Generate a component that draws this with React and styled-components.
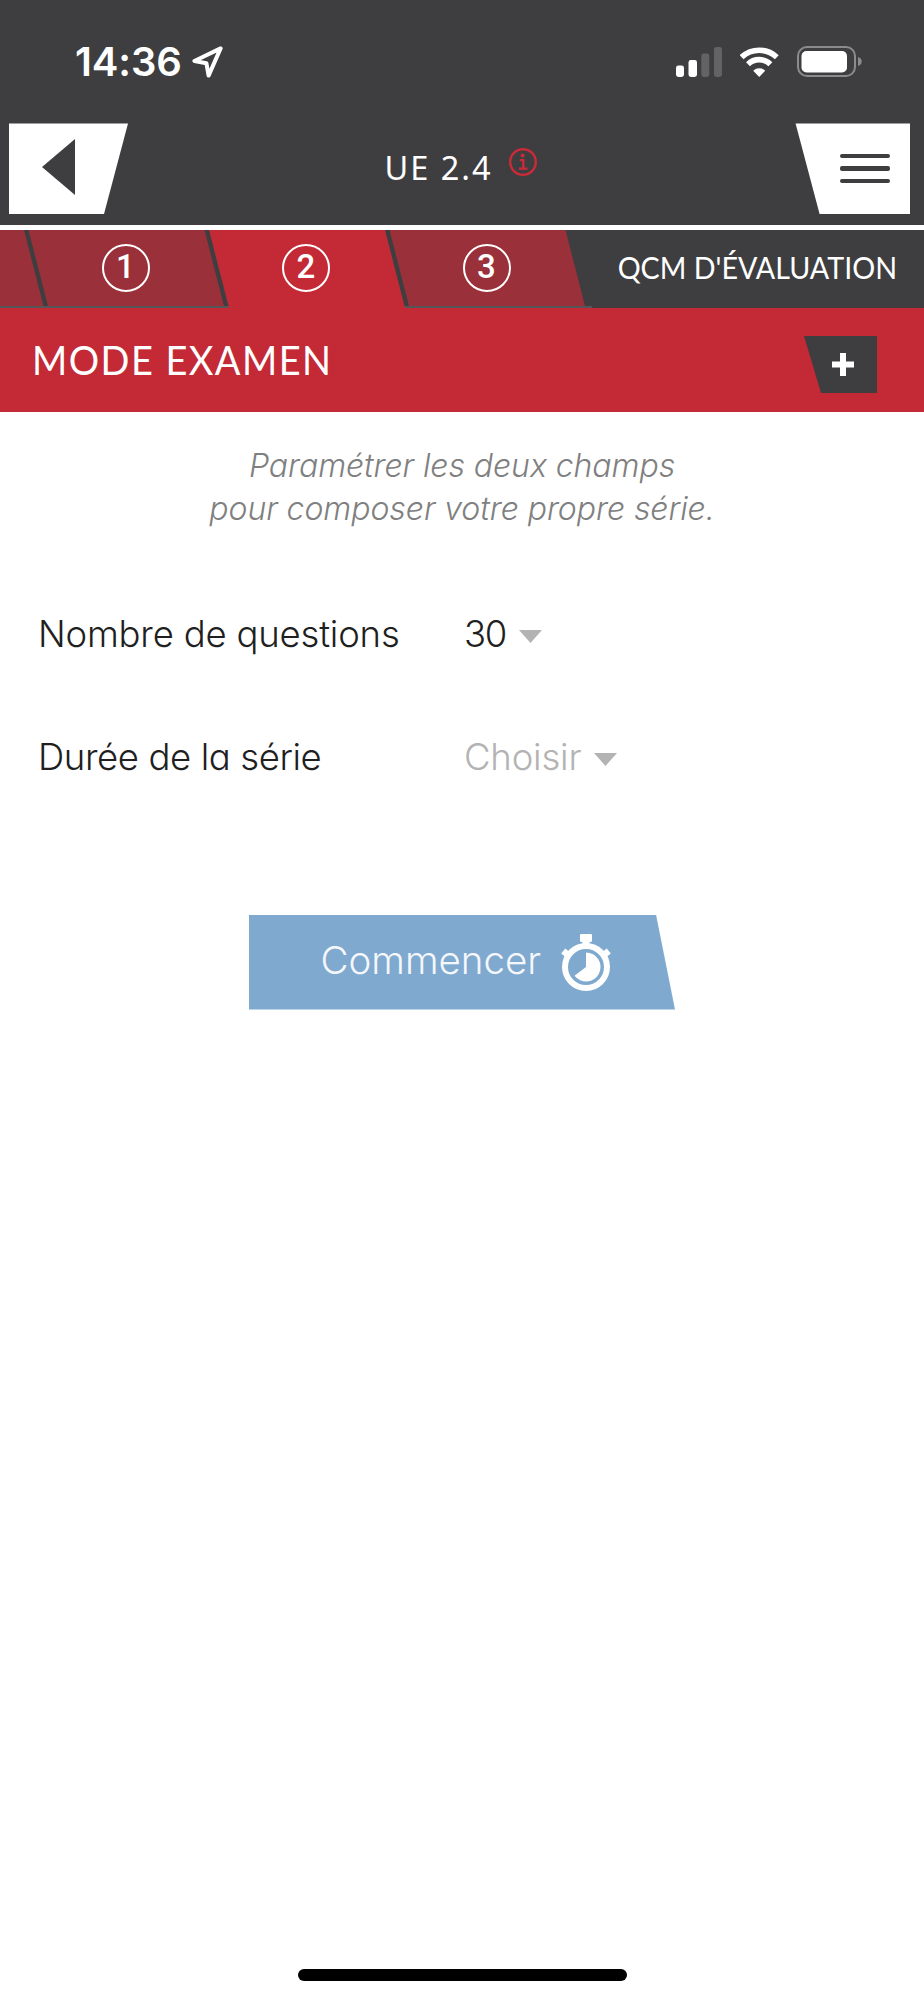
import React, { useState } from 'react';
import styled, { createGlobalStyle } from 'styled-components';

const GlobalStyle = createGlobalStyle`
  * {
    box-sizing: border-box;
  }

  body {
    margin: 0;
    background: #fff;
    font-family: Inter, 'Liberation Sans', sans-serif;
  }

  button {
    margin: 0;
    padding: 0;
    border: none;
    font: inherit;
  }
`;

const Screen = styled.div`
  display: flex;
  flex-direction: column;
  width: 924px;
  height: 2000px;
  overflow: hidden;
  background: #fff;
`;

const Header = styled.header`
  flex: none;
  height: 225px;
  background: #3e3e40;
`;

const StatusBar = styled.div`
  display: flex;
  align-items: center;
  justify-content: space-between;
  height: 123px;
  padding: 0 61px 0 75px;
`;

const StatusGroup = styled.div`
  display: flex;
  align-items: center;
  gap: ${(props) => props.$gap}px;
`;

const Time = styled.span`
  color: #fff;
  font-size: 40px;
  font-weight: 600;
  line-height: 48px;
  letter-spacing: -0.1px;
`;

const NavBar = styled.nav`
  display: flex;
  justify-content: space-between;
  height: 91px;
  padding: 0 14px 0 9px;
`;

const BackButton = styled.button`
  width: 119px;
  height: 91px;
  padding-left: 33px;
  text-align: left;
  background: #fff;
  clip-path: polygon(0 0.4px, 100% 0.4px, 95px 100%, 0 100%);
`;

const MenuButton = styled.button`
  display: flex;
  flex-direction: column;
  justify-content: center;
  gap: 8px;
  width: 115px;
  height: 91px;
  padding-left: 45px;
  background: #fff;
  clip-path: polygon(0.6px 0.4px, 100% 0.4px, 100% 100%, 24.6px 100%);
`;

const MenuLine = styled.span`
  width: 50px;
  height: 4.5px;
  border-radius: 2px;
  background: #3e3e40;
`;

const NavTitle = styled.div`
  display: flex;
  align-items: center;
  gap: 16px;
  height: 90px;
  margin-right: 2px;
`;

const Title = styled.h1`
  margin: 0;
  color: #fff;
  font: 400 32.5px/44px 'Noto Sans', sans-serif;
  letter-spacing: 2px;
`;

const InfoIcon = styled.svg`
  margin-bottom: 12px;
`;

const Tabs = styled.div`
  display: flex;
  flex: none;
  height: 83px;
  padding-right: 27px;
  border-top: 5px solid #fff;
  background: #3e3e40;
  overflow: hidden;
`;

const Tab = styled.div`
  position: relative;
  flex: none;
  width: 196px;
  margin-right: -15.5px;
  z-index: ${(props) => (props.$active ? 1 : 0)};

  &:first-child {
    margin-left: -152px;
  }

  &::after {
    content: '';
    position: absolute;
    left: 13px;
    right: -6px;
    bottom: 0;
    height: 2.5px;
    background: ${(props) => (props.$active ? 'transparent' : '#555659')};
  }
`;

const TabShape = styled.div`
  display: flex;
  align-items: center;
  justify-content: center;
  height: 78px;
  padding: 0 2px 2px 0;
  background: ${(props) => (props.$active ? '#c32a36' : '#9a3039')};
  clip-path: polygon(0 0, 176px 0, 100% 100%, 20px 100%);
`;

const TabNumber = styled.span`
  width: 48px;
  height: 48px;
  border: 2px solid #fff;
  border-radius: 50%;
  color: #fff;
  text-align: center;
  font: 500 33px/41px Roboto, sans-serif;
`;

const TabLabel = styled.span`
  margin-left: auto;
  color: #fff;
  font: 400 31px/75px Lato, sans-serif;
  white-space: nowrap;
  transform: scaleX(0.925);
  transform-origin: right;
`;

const ModeBar = styled.section`
  display: flex;
  flex: none;
  justify-content: space-between;
  height: 104px;
  padding: 28px 47px 0 32px;
  background: #c32a36;
`;

const ModeTitle = styled.h2`
  margin: 0;
  color: #fff;
  font: 400 40px/48px Lato, sans-serif;
  letter-spacing: 1.5px;
  transform: scaleX(0.95);
  transform-origin: left;
`;

const AddButton = styled.button`
  display: flex;
  align-items: center;
  justify-content: center;
  width: 73px;
  height: 57px;
  padding-left: 5px;
  background: #3e3e40;
  clip-path: polygon(0 0, 100% 0, 100% 100%, 17px 100%);
`;

const Hint = styled.p`
  margin: 32px 0 0;
  color: #808080;
  text-align: center;
  font-size: 32px;
  font-style: italic;
  font-weight: 300;
  line-height: 43px;
  letter-spacing: -0.07px;
  font-feature-settings: 'cv11';
`;

const Form = styled.form`
  display: flex;
  flex-direction: column;
  align-items: center;
`;

const Fields = styled.div`
  display: flex;
  flex-direction: column;
  align-self: stretch;
  gap: 75px;
  padding: 80px 0 0 38px;
`;

const Field = styled.div`
  display: grid;
  grid-template-columns: 426px auto;
  font-size: 36.5px;
  font-weight: 300;
  line-height: 48px;
  font-feature-settings: 'cv11';
`;

const Label = styled.span`
  color: #1f1f1f;
  letter-spacing: ${(props) => props.$spacing}px;
`;

const Select = styled.button`
  display: flex;
  align-items: center;
  gap: 13px;
  color: ${(props) => (props.$empty ? '#b3b3b3' : '#1f1f1f')};
  letter-spacing: ${(props) => (props.$empty ? -0.2 : -1.4)}px;
  background: none;
`;

const CaretIcon = styled.svg`
  margin-top: 5px;
`;

const StartButton = styled.button`
  display: flex;
  align-items: center;
  gap: 20px;
  width: 426px;
  height: 95px;
  margin-top: 133.5px;
  padding-left: 71.5px;
  color: #f5f7fb;
  background: #7fa9cf;
  font-size: 38.5px;
  font-weight: 300;
  clip-path: polygon(0 0, 407px 0, 100% 100%, 0 100%);
`;

const StartLabel = styled.span`
  margin-bottom: 4px;
`;

const HomeIndicator = styled.div`
  flex: none;
  align-self: center;
  width: 329px;
  height: 12px;
  margin: auto 0 19px;
  border-radius: 6px;
  background: #000;
`;

const Caret = () => (
  <CaretIcon width="23" height="13" viewBox="0 0 23 13">
    <path d="M0 0H23L11.5 13Z" fill="#b3b3b3" />
  </CaretIcon>
);

const Location = () => (
  <svg width="32" height="33" viewBox="0 0 32 33">
    <path
      d="M28.6 3.4 2.4 16 14.4 18.2 16.6 30.6Z"
      fill="none"
      stroke="#fff"
      strokeWidth="4"
      strokeLinejoin="round"
    />
  </svg>
);

const Signal = () => (
  <svg width="47" height="30" viewBox="0 0 47 30">
    <rect x="0" y="18.5" width="8" height="11.5" rx="2.4" fill="#fff" />
    <rect x="12.5" y="13" width="8.5" height="17" rx="2.4" fill="#fff" />
    <rect x="25.3" y="6.5" width="8" height="23.5" rx="2.4" fill="#636366" />
    <rect x="38" y="0" width="8" height="30" rx="2.4" fill="#636366" />
  </svg>
);

const Wifi = () => (
  <svg width="40" height="30" viewBox="0.8 0 40 30">
    <g fill="none" stroke="#fff" strokeWidth="5.6">
      <path d="M2.4 10.2A25.6 25.6 0 0 1 37.6 10.2" />
      <path d="M8.8 17.2A16 16 0 0 1 31.2 17.2" />
    </g>
    <path d="M14 23.8A8.6 8.6 0 0 1 26 23.8L20 30Z" fill="#fff" />
  </svg>
);

const Battery = () => (
  <svg width="66" height="31" viewBox="0 0 66 31">
    <rect x="1" y="1" width="57" height="29" rx="9" fill="none" stroke="#8b8b8d" strokeWidth="2" />
    <rect x="4.5" y="5" width="45.5" height="21.5" rx="5" fill="#fff" />
    <path d="M61 11C66 12.5 66 18.5 61 20Z" fill="#8b8b8d" />
  </svg>
);

const Stopwatch = () => (
  <svg width="50" height="57" viewBox="0 0 50 57">
    <rect x="19" y="0" width="12" height="8" rx="1.2" fill="#fff" />
    <rect x="21.5" y="7" width="7" height="4" fill="#fff" />
    <path d="M2.2 17 9 22.5M47.8 17 41 22.5" stroke="#fff" strokeWidth="6.5" />
    <circle cx="25" cy="33" r="21" fill="none" stroke="#fff" strokeWidth="6" />
    <path d="M25 18.5A14.5 14.5 0 1 1 13.5 41.8L25 33Z" fill="#fff" />
  </svg>
);

function App() {
  const [count] = useState('30');
  const [duration] = useState('');

  return (
    <Screen>
      <GlobalStyle />
      <Header>
        <StatusBar>
          <StatusGroup $gap={10.5}>
            <Time>14:36</Time>
            <Location />
          </StatusGroup>
          <StatusGroup $gap={17}>
            <Signal />
            <Wifi />
            <Battery />
          </StatusGroup>
        </StatusBar>
        <NavBar>
          <BackButton>
            <svg width="33" height="56" viewBox="0 0 33 56">
              <path d="M33 0V56L0 28Z" fill="#3e3e40" />
            </svg>
          </BackButton>
          <NavTitle>
            <Title>UE 2.4</Title>
            <InfoIcon width="28" height="28" viewBox="0 0 28 28">
              <circle cx="14" cy="14" r="12.8" fill="none" stroke="#cb2a39" strokeWidth="2.4" />
              <circle cx="13.6" cy="7.5" r="2" fill="#cb2a39" />
              <path d="M10.8 12.2H14.3V20.3M10 20.6H18.5" fill="none" stroke="#cb2a39" strokeWidth="2.3" />
            </InfoIcon>
          </NavTitle>
          <MenuButton>
            <MenuLine />
            <MenuLine />
            <MenuLine />
          </MenuButton>
        </NavBar>
      </Header>
      <Tabs>
        <Tab>
          <TabShape />
        </Tab>
        {[1, 2, 3].map((n) => (
          <Tab key={n} $active={n === 2}>
            <TabShape $active={n === 2}>
              <TabNumber>{n}</TabNumber>
            </TabShape>
          </Tab>
        ))}
        <TabLabel>QCM D'ÉVALUATION</TabLabel>
      </Tabs>
      <ModeBar>
        <ModeTitle>MODE EXAMEN</ModeTitle>
        <AddButton>
          <svg width="22" height="23" viewBox="0 0 22 23">
            <path d="M11 0V23M0 11.5H22" stroke="#fff" strokeWidth="6" />
          </svg>
        </AddButton>
      </ModeBar>
      <Hint>
        Paramétrer les deux champs
        <br />
        pour composer votre propre série.
      </Hint>
      <Form onSubmit={(e) => e.preventDefault()}>
        <Fields>
          <Field>
            <Label $spacing={-0.2}>Nombre de questions</Label>
            <Select type="button">
              <span>{count}</span>
              <Caret />
            </Select>
          </Field>
          <Field>
            <Label $spacing={-0.4}>Durée de la série</Label>
            <Select type="button" $empty>
              <span>{duration || 'Choisir'}</span>
              <Caret />
            </Select>
          </Field>
        </Fields>
        <StartButton type="submit">
          <StartLabel>Commencer</StartLabel>
          <Stopwatch />
        </StartButton>
      </Form>
      <HomeIndicator />
    </Screen>
  );
}

export default App;
